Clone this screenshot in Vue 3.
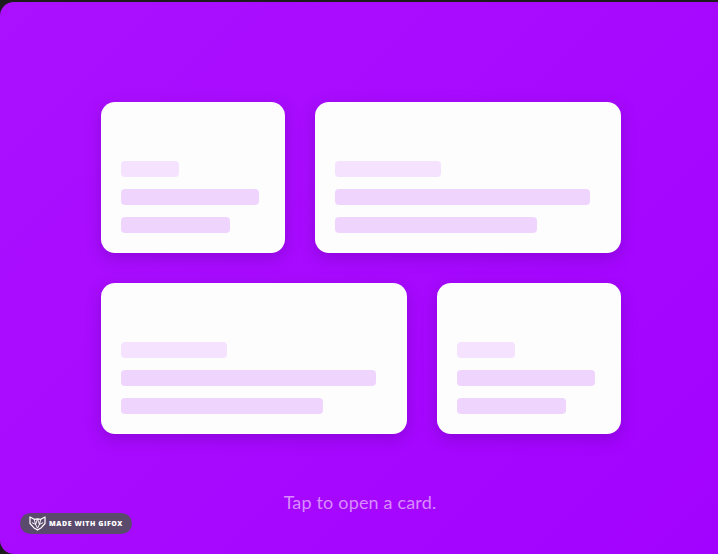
<template>
  <div class="page">
    <div class="stage">
      <div class="cards">
        <div v-for="(row, i) in rows" :key="i" class="card-row">
          <div v-for="card in row" :key="card" class="card" :class="card">
            <div class="bar bar-title"></div>
            <div class="bar bar-long"></div>
            <div class="bar bar-mid"></div>
          </div>
        </div>
      </div>
      <p class="hint">Tap to open a card.</p>
      <div class="badge">
        <svg class="fox" viewBox="0 0 18 16" fill="none" stroke="#fff" stroke-width="1.3" stroke-linejoin="round">
          <path d="M1 1 L5.5 3.5 L9 3 L12.5 3.5 L17 1 L17 8 L13 12.5 L9 15 L5 12.5 L1 8 Z" />
          <path d="M3 7 L7 9 L9 13 L11 9 L15 7 M5.5 3.5 L7 9 M12.5 3.5 L11 9 M9 3 L7 9 M9 3 L11 9" stroke-width="1" />
        </svg>
        <span>MADE WITH GIFOX</span>
      </div>
    </div>
  </div>
</template>

<script setup>
// small card first on the top row, wide card first on the bottom row
const rows = [
  ['small', 'wide'],
  ['wide', 'small'],
]
</script>

<style>
html, body {
  margin: 0;
  background: #1a1a1a;
}
</style>

<style scoped>
.page {
  width: 718px;
  height: 554px;
  overflow: hidden;
  background: #1c1c1c;
  padding-top: 2px;
  box-sizing: border-box;
}
.stage {
  position: relative;
  height: 552px;
  border-radius: 14px 0 0 14px;
  background: linear-gradient(135deg, #ab10ff 0%, #a80aff 45%, #a202ff 100%);
  padding: 100px 97px 0 101px;
  box-sizing: border-box;
}
.cards {
  display: flex;
  flex-direction: column;
  gap: 30px;
}
.card-row {
  display: flex;
  gap: 30px;
}
.card {
  height: 151px;
  box-sizing: border-box;
  padding: 59px 20px 20px;
  background: #fdfdfe;
  border-radius: 14px;
  box-shadow: 0 5px 16px rgba(80, 0, 130, 0.3);
  display: flex;
  flex-direction: column;
  gap: 12px;
}
.small { width: 184px; }
.wide { width: 306px; }
.bar {
  height: 16px;
  border-radius: 4px;
  background: #efd5fe;
}
.bar-title {
  width: 40%;
  background: #f5e2ff;
}
.bar-long { width: 96%; }
.bar-mid { width: 76%; }
.hint {
  margin: 56px 2px 0 0;
  text-align: center;
  font-family: Lato, "Liberation Sans", sans-serif;
  font-size: 18px;
  letter-spacing: 0.17px;
  line-height: 24px;
  color: #d88cff;
}
.badge {
  position: absolute;
  left: 20px;
  top: 511px;
  width: 112px;
  height: 21px;
  box-sizing: border-box;
  padding-left: 9px;
  display: flex;
  align-items: center;
  gap: 3px;
  border-radius: 11px;
  background: #5a4a6c;
  color: #fff;
  font-family: "Open Sans", "Liberation Sans", sans-serif;
  font-size: 7px;
  font-weight: 800;
  letter-spacing: 0.55px;
  white-space: nowrap;
}
.fox {
  width: 17px;
  height: 15px;
  flex: none;
}
</style>
